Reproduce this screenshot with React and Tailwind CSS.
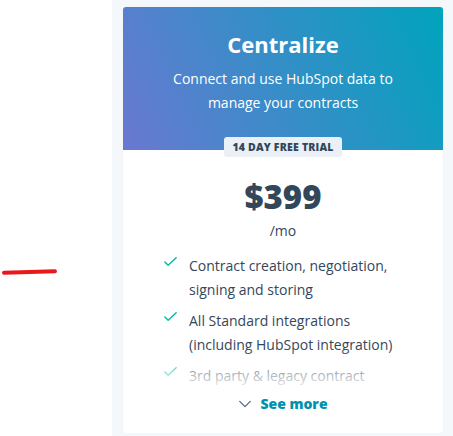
import React from 'react';

const features = [
  'Contract creation, negotiation, signing and storing',
  'All Standard integrations (including HubSpot integration)',
  '3rd party & legacy contract',
];

const Check = ({ className }) => (
  <svg viewBox="0 0 16 16" className={className} fill="none" stroke="currentColor" strokeWidth="1.6" strokeLinecap="round" strokeLinejoin="round">
    <path d="M2 7.5l3.5 3.5L14 3" />
  </svg>
);

export default function App() {
  return (
    <div className="flex h-[436px] w-[453px] bg-white font-['Open_Sans',sans-serif] text-[#33475b]">
      <div className="relative w-[112px] shrink-0">
        <div className="absolute left-[2px] top-[270px] h-[4px] w-[55px] -rotate-[1.5deg] rounded-full bg-[#e8191c]" />
      </div>
      <div className="flex-1 bg-[#f5f8fa] pl-[11px] pr-[10px] pt-[7px]">
        <div className="flex h-[426px] w-[320px] flex-col overflow-hidden rounded-[3px] bg-white shadow-[0_0_1px_rgba(0,0,0,0.08)]">
          <div className="flex h-[143px] flex-col items-center bg-[linear-gradient(65deg,#6a78d1,#00a4bd)] pt-[20px] text-center text-white">
            <h2 className="text-[22px] font-bold leading-[34px]">Centralize</h2>
            <p className="mt-[6px] w-[260px] text-[14px] leading-[24px]">Connect and use HubSpot data to manage your contracts</p>
          </div>
          <div className="relative flex flex-1 flex-col items-center">
            <div className="absolute -top-[13px] rounded-[3px] bg-[#eaf0f6] px-[8px] text-[10.5px] font-extrabold leading-[20px] tracking-[0.2px] text-[#33475b]">14 DAY FREE TRIAL</div>
            <div className="mt-[25px] text-[33px] font-extrabold leading-[44px]">$399</div>
            <div className="mt-[2px] text-[14px] leading-[20px]">/mo</div>
            <div className="relative mt-[13px] w-full">
              <ul className="flex flex-col gap-[7px] pl-[40px] pr-[30px]">
                {features.map((f, i) => (
                  <li key={i} className="flex gap-[11px] text-[14px] leading-[24px]">
                    <Check className="mt-[1px] h-[15px] w-[15px] shrink-0 text-[#00bda5]" />
                    <span>{f}</span>
                  </li>
                ))}
              </ul>
              <div className="absolute bottom-0 left-0 h-[40px] w-full bg-gradient-to-b from-transparent to-white/90" />
            </div>
            <button className="mt-[5px] flex items-center gap-[8px] text-[14px] font-extrabold text-[#0091ae]">
              <svg viewBox="0 0 16 16" className="h-[14px] w-[14px] text-[#516f90]" fill="none" stroke="currentColor" strokeWidth="1.6" strokeLinecap="round" strokeLinejoin="round">
                <path d="M2 5l6 6 6-6" />
              </svg>
              See more
            </button>
          </div>
        </div>
      </div>
    </div>
  );
}
